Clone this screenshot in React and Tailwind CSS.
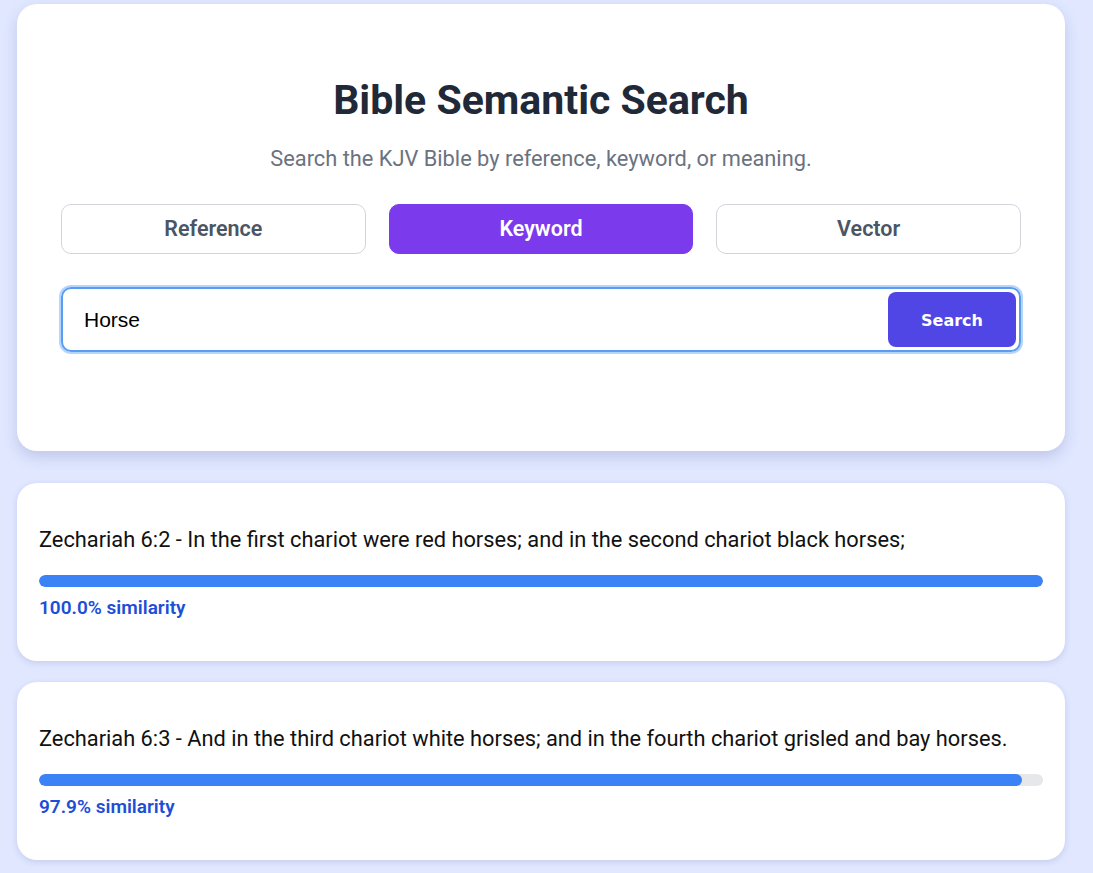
import { useState } from 'react'

const results = [
  {
    ref: 'Zechariah 6:2',
    text: 'In the first chariot were red horses; and in the second chariot black horses;',
    score: 100.0,
  },
  {
    ref: 'Zechariah 6:3',
    text: 'And in the third chariot white horses; and in the fourth chariot grisled and bay horses.',
    score: 97.9,
  },
]

const modes = ['Reference', 'Keyword', 'Vector']

export default function App() {
  const [mode, setMode] = useState('Keyword')
  const [query, setQuery] = useState('Horse')

  return (
    <div className="min-h-screen bg-[#e0e7ff] pt-[4px] pb-[13px] font-['Roboto',sans-serif]">
      <div className="ml-[17px] w-[1048px]">
        <div className="rounded-[20px] bg-white px-[44px] pt-[72px] pb-[99px] shadow-[0_6px_14px_rgba(80,90,160,0.22)]">
          <h1 className="text-center text-[41px] font-bold leading-[48px] text-[#1f2937]">
            Bible Semantic Search
          </h1>
          <p className="mt-[20px] text-center text-[21.8px] leading-[30px] text-[#6b7280]">
            Search the KJV Bible by reference, keyword, or meaning.
          </p>

          <div className="mt-[30px] grid grid-cols-3 gap-[23px]">
            {modes.map((m) => (
              <button
                key={m}
                onClick={() => setMode(m)}
                className={
                  m === mode
                    ? 'h-[50px] rounded-[10px] border border-[#7c3aed] bg-[#7c3aed] text-[21.5px] font-semibold text-white'
                    : 'h-[50px] rounded-[10px] border border-[#d1d5db] bg-white text-[21.5px] font-semibold text-[#4b5563]'
                }
              >
                {m}
              </button>
            ))}
          </div>

          <div className="mt-[33px] flex h-[65px] items-center rounded-[10px] border-2 border-[#5b9cf0] pr-[3px] shadow-[0_0_0_2px_rgba(147,197,253,0.7)]">
            <input
              value={query}
              onChange={(e) => setQuery(e.target.value)}
              className="h-full flex-1 bg-transparent pl-[21px] font-['Liberation_Sans',sans-serif] text-[21px] text-black outline-none"
            />
            <button className="h-[55px] w-[128px] rounded-[8px] bg-[#4f46e5] pt-[2px] font-['DejaVu_Sans',sans-serif] text-[16px] font-bold text-white">
              Search
            </button>
          </div>
        </div>

        <div className="mt-[32px] flex flex-col gap-[21px]">
          {results.map((r) => (
            <div
              key={r.ref}
              className="rounded-[20px] bg-white px-[22px] pt-[42px] pb-[40px] shadow-[0_2px_6px_rgba(80,90,160,0.18)]"
            >
              <p className="text-[21.8px] leading-[30px] text-[#111]">
                {r.ref} - {r.text}
              </p>
              <div className="mt-[20px] h-[12px] w-full overflow-hidden rounded-full bg-[#e5e7eb]">
                <div className="h-full rounded-full bg-[#3b82f6]" style={{ width: `${r.score}%` }} />
              </div>
              <p className="mt-[8px] text-[19px] font-semibold leading-[26px] text-[#1d4ed8]">
                {r.score.toFixed(1)}% similarity
              </p>
            </div>
          ))}
        </div>
      </div>
    </div>
  )
}
